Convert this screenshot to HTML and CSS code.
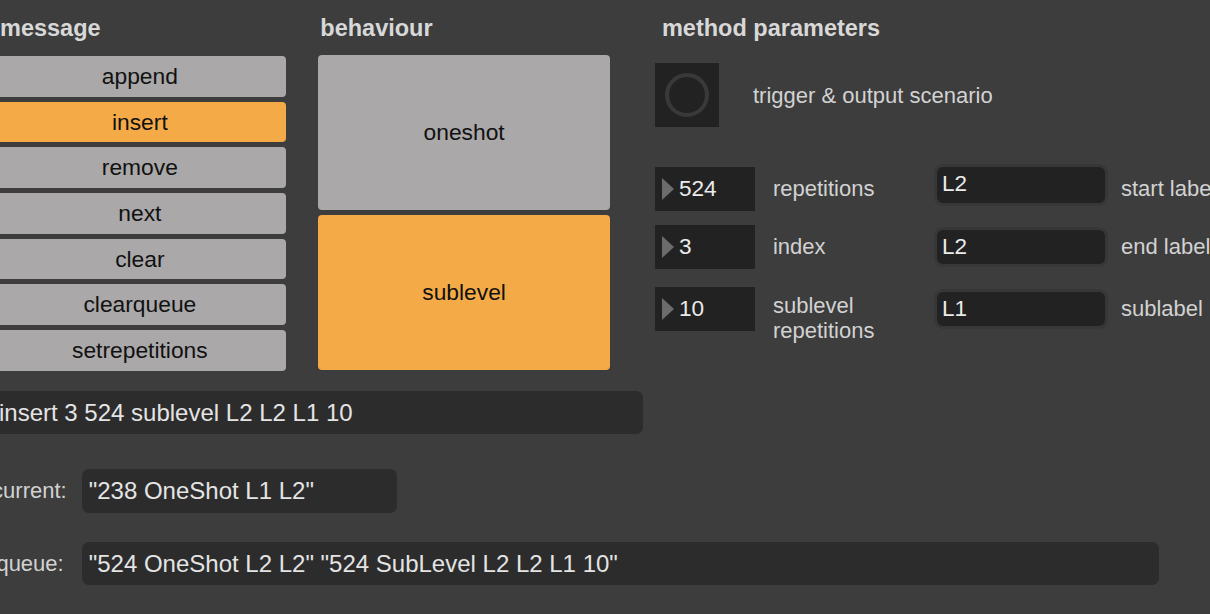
FILE: index.html
```html
<!DOCTYPE html>
<html>
<head>
<meta http-equiv="content-type" content="text/html; charset=UTF-8" />
<title>scenario queue</title>
<link rel="stylesheet" href="styles.css">
</head>

<body>

<div class="patch">

    <div class="top">

        <div class="col col-message">
            <h2>message</h2>
            <div class="msg-buttons">
                <div class="btn">append</div>
                <div class="btn on">insert</div>
                <div class="btn">remove</div>
                <div class="btn">next</div>
                <div class="btn">clear</div>
                <div class="btn">clearqueue</div>
                <div class="btn">setrepetitions</div>
            </div>
        </div>

        <div class="col col-behaviour">
            <h2>behaviour</h2>
            <div class="mode-buttons">
                <div class="btn big">oneshot</div>
                <div class="btn big on">sublevel</div>
            </div>
        </div>

        <div class="col col-params">
            <h2>method parameters</h2>
            <div class="trigger">
                <div class="bang"><span class="ring"></span></div>
                <span class="label">trigger &amp; output scenario</span>
            </div>
            <div class="params">
                <div class="param-row">
                    <div class="numbox"><span class="arrow"></span>524</div>
                    <span class="label">repetitions</span>
                    <div class="field">L2</div>
                    <span class="label">start label</span>
                </div>
                <div class="param-row">
                    <div class="numbox"><span class="arrow"></span>3</div>
                    <span class="label">index</span>
                    <div class="field">L2</div>
                    <span class="label">end label</span>
                </div>
                <div class="param-row">
                    <div class="numbox"><span class="arrow"></span>10</div>
                    <span class="label two-lines">sublevel<br>repetitions</span>
                    <div class="field">L1</div>
                    <span class="label">sublabel</span>
                </div>
            </div>
        </div>

    </div>

    <div class="msgbox">insert 3 524 sublevel L2 L2 L1 10</div>

    <div class="status">
        <div class="status-row">
            <span class="status-label">current:</span>
            <div class="box box-current">"238 OneShot L1 L2"</div>
        </div>
        <div class="status-row queue">
            <span class="status-label">queue:</span>
            <div class="box box-queue">"524 OneShot L2 L2" "524 SubLevel L2 L2 L1 10"</div>
        </div>
    </div>

</div>

</body>
</html>
```

FILE: styles.css
```css
* {
margin: 0;
padding: 0;
box-sizing: border-box;
}

html,body{
height: 100%;
background-color: #3d3d3d;
font-family: "Liberation Sans", Arial, sans-serif;
color: #d2d2d2;
overflow: hidden;
}

.patch{
width: 1210px;
}

/* top row: three columns */
.top{
display: flex;
align-items: flex-start;
padding-top: 14px;
}

h2{
font-size: 23.5px;
font-weight: bold;
line-height: 28px;
color: #d8d8d8;
}

.col-message{
margin-left: -6px;
width: 291.7px;
}

.col-message h2{
padding-left: 6px;
}

.col-behaviour{
margin-left: 32.6px;
width: 291.7px;
}

.col-behaviour h2{
padding-left: 2px;
}

.col-params{
margin-left: 45px;
flex: 1;
min-width: 0;
}

.col-params h2{
padding-left: 7px;
white-space: nowrap;
}

.msg-buttons{
display: flex;
flex-direction: column;
gap: 5px;
margin-top: 14px;
}

.mode-buttons{
display: flex;
flex-direction: column;
gap: 5px;
margin-top: 13px;
}

.btn{
height: 40.7px;
display: flex;
align-items: center;
justify-content: center;
background-color: #aaa8a9;
border-radius: 4px;
font-size: 22.8px;
color: #111;
}

.btn.big{
height: 155px;
}

.btn.on{
background-color: #f4ab47;
}

/* method parameters */
.trigger{
display: flex;
align-items: center;
margin-top: 21px;
}

.bang{
width: 64px;
height: 64px;
flex-shrink: 0;
background-color: #222;
display: flex;
align-items: center;
justify-content: center;
}

.ring{
width: 44px;
height: 44px;
border: 4px solid #393939;
border-radius: 50%;
}

.label{
font-size: 22px;
line-height: 25px;
color: #d2d2d2;
white-space: nowrap;
}

.trigger .label{
margin-left: 34px;
}

.params{
margin-top: 40px;
}

.param-row{
display: grid;
grid-template-columns: 118px 163px 185px 200px;
grid-template-rows: 43.7px;
align-items: center;
height: 43.7px;
}

.param-row:nth-child(1){
margin-bottom: 14.3px;
}

.param-row:nth-child(2){
margin-bottom: 18.3px;
}

.numbox{
width: 100px;
height: 43.7px;
background-color: #222;
display: flex;
align-items: center;
padding-left: 7px;
font-size: 22.6px;
color: #ebebeb;
}

.arrow{
width: 0;
height: 0;
border-top: 11px solid transparent;
border-bottom: 11px solid transparent;
border-left: 12px solid #6c6c6c;
margin-right: 5px;
}

.field{
width: 168px;
height: 34px;
margin-left: 1px;
background-color: #222;
border-radius: 6px;
box-shadow: 0 0 0 3px #373737;
padding-left: 5px;
display: flex;
align-items: center;
font-size: 22.5px;
color: #ebebeb;
}

.param-row:nth-child(1) .field{
align-self: start;
height: 36px;
padding-bottom: 3px;
}

.label.two-lines{
align-self: start;
margin-top: 6px;
}

/* message + status boxes */
.msgbox{
margin-top: 20px;
margin-left: -6px;
width: 648.7px;
height: 43.5px;
background-color: #2c2c2c;
border-radius: 7px;
padding-left: 5px;
font-size: 24px;
line-height: 43.5px;
color: #e4e4e4;
}

.status{
margin-top: 35px;
display: flex;
flex-direction: column;
gap: 29px;
}

.status-row{
display: flex;
align-items: center;
}

.status-label{
width: 81.7px;
flex-shrink: 0;
display: flex;
justify-content: flex-end;
padding-right: 15px;
font-size: 22px;
color: #d2d2d2;
white-space: nowrap;
}

.queue .status-label{
padding-right: 18px;
}

.box{
height: 43.5px;
background-color: #2c2c2c;
border-radius: 7px;
padding-left: 7px;
font-size: 24px;
line-height: 43.5px;
color: #e4e4e4;
white-space: nowrap;
}

.box-current{
width: 315px;
}

.box-queue{
width: 1077px;
}
```
